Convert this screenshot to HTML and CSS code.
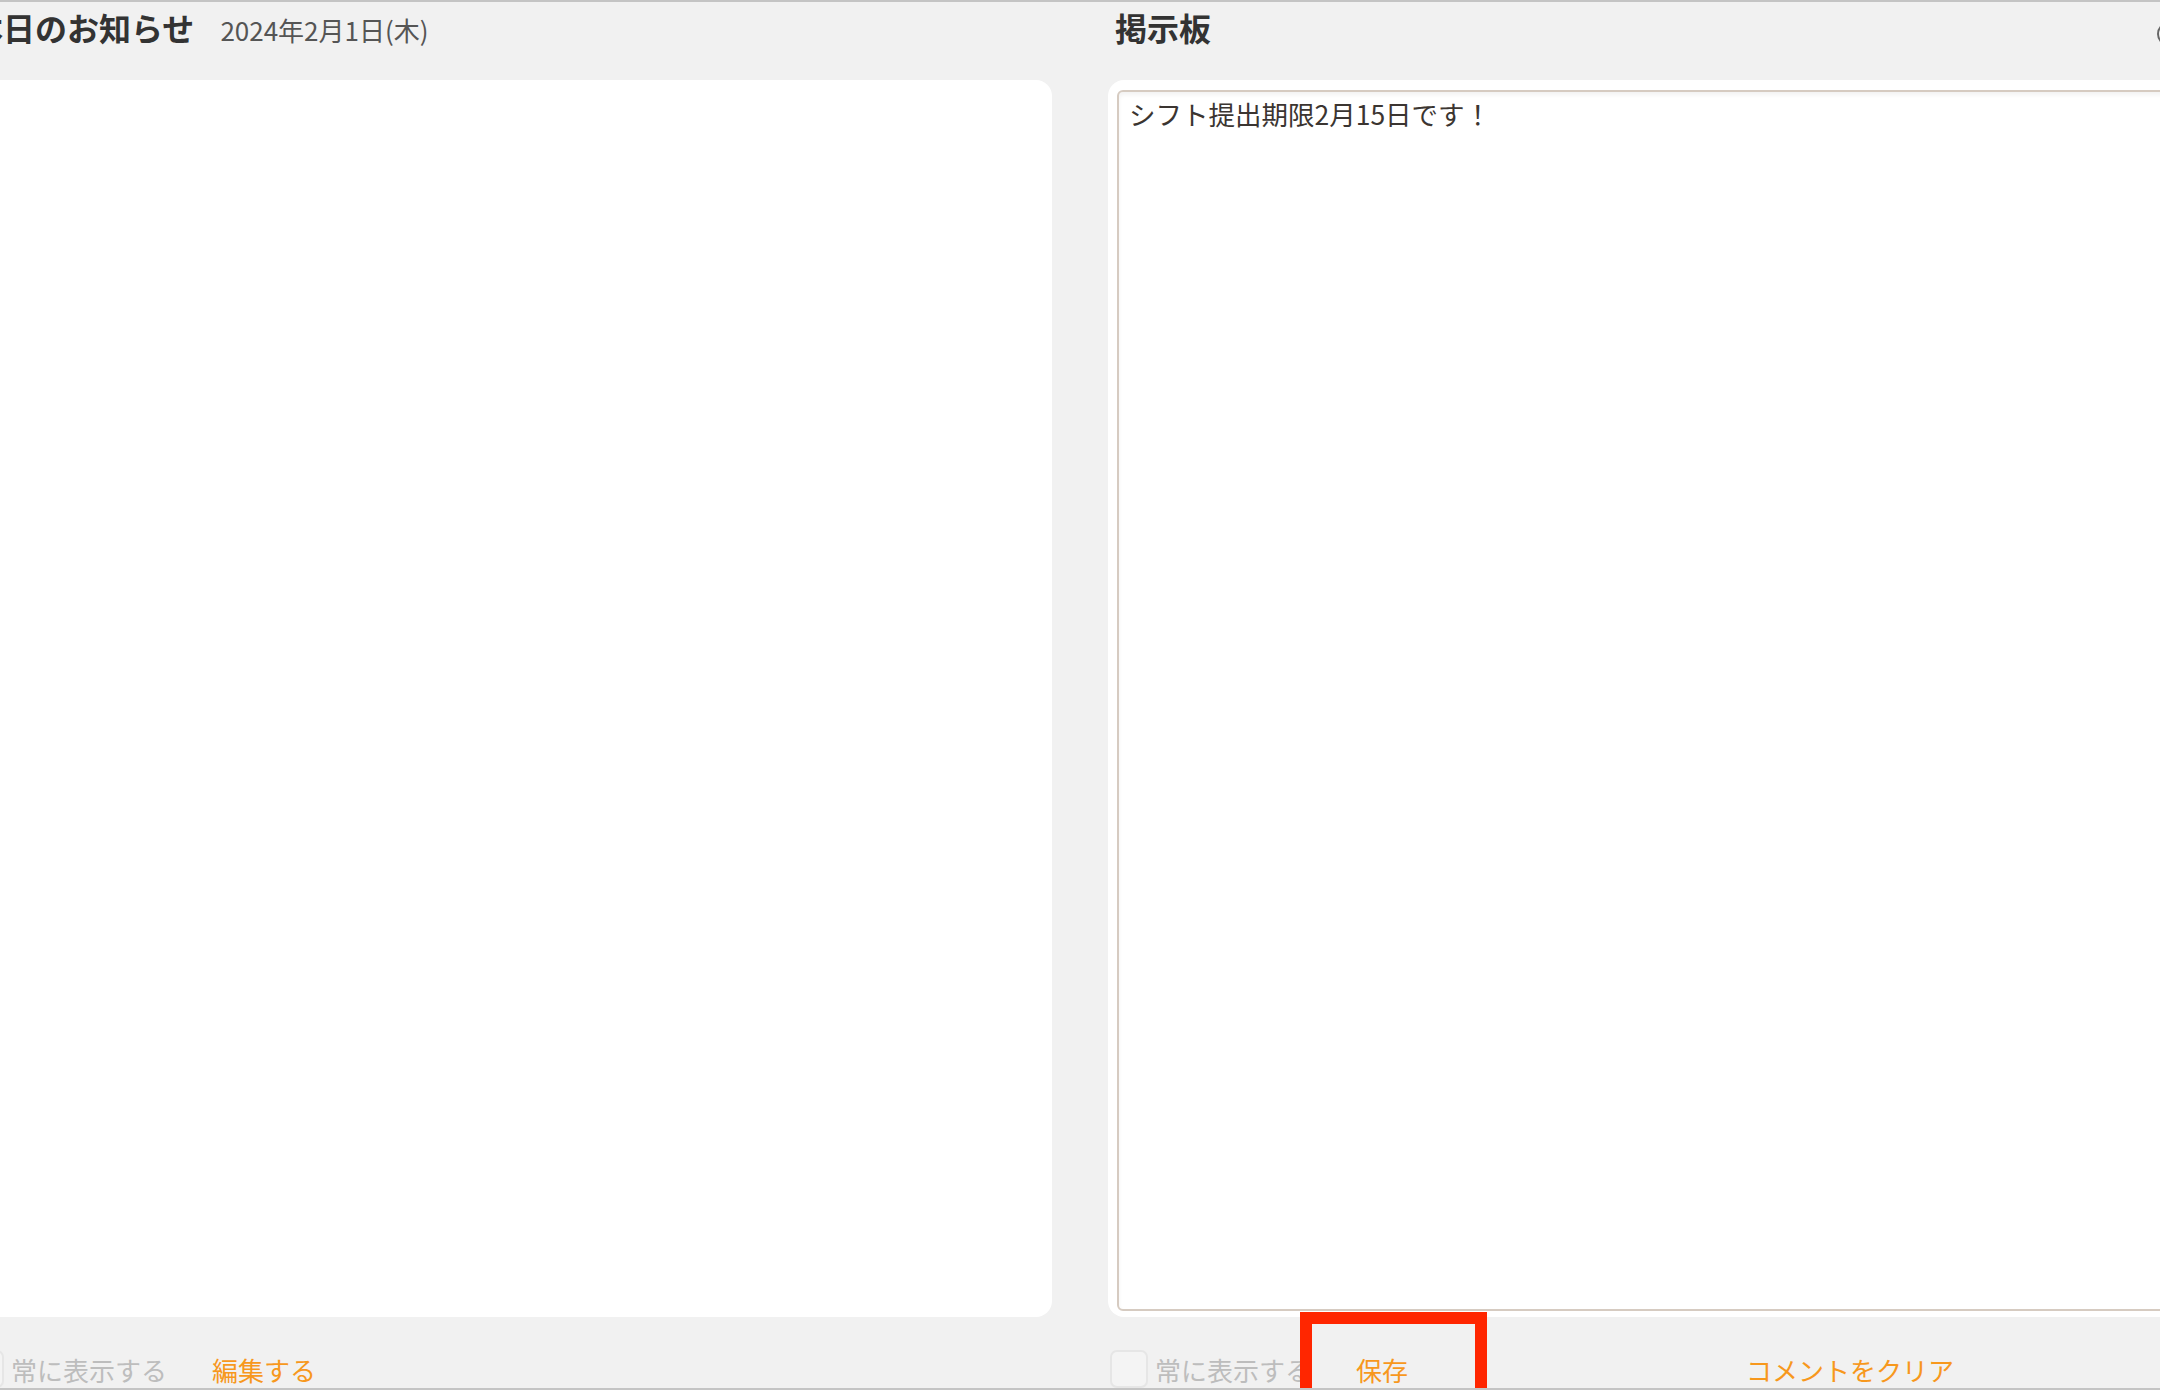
FILE: index.html
```html
<!DOCTYPE html>
<html lang="ja">
<head>
  <meta charset="UTF-8" />
  <meta name="viewport" content="width=device-width, initial-scale=1.0"/>
  <title>本日のお知らせ・掲示板</title>
  <link rel="stylesheet" href="styles.css">
</head>
<body>
  <div class="screen">
    <div class="board">
      <section class="col">
        <div class="col-head">
          <h2>本日のお知らせ</h2>
          <span class="date">2024年2月1日(木)</span>
        </div>
        <div class="panel"></div>
        <div class="col-foot">
          <label class="check"><span class="box"></span>常に表示する</label>
          <a class="action">編集する</a>
        </div>
      </section>

      <section class="col">
        <div class="col-head">
          <h2>掲示板</h2>
          <span class="help"></span>
        </div>
        <div class="panel panel-input">
          <textarea class="memo">シフト提出期限2月15日です！</textarea>
        </div>
        <div class="col-foot">
          <label class="check"><span class="box"></span>常に表示する</label>
          <a class="action">保存</a>
          <a class="action action-clear">コメントをクリア</a>
        </div>
      </section>
    </div>

    <div class="highlight"></div>
  </div>
</body>
</html>
```

FILE: styles.css
```css
body {
  margin: 0;
  padding: 0;
  background-color: #f1f1f1;
  font-family: "Noto Sans CJK JP", "Noto Sans", sans-serif;
  color: #333;
}
.screen {
  position: relative;
  width: 2160px;
  height: 1390px;
  overflow: hidden;
  box-sizing: border-box;
  border-top: 2px solid #c4c4c4;
  border-bottom: 2px solid #c4c4c4;
}
.board {
  display: grid;
  grid-template-columns: 1088px 1088px;
  column-gap: 56px;
  margin-left: -36px;
}
.col {
  display: flex;
  flex-direction: column;
}
.col-head {
  display: flex;
  align-items: baseline;
  height: 78px;
  box-sizing: border-box;
  padding: 5px 0 0 7px;
}
.col-head h2 {
  margin: 0;
  font-size: 32px;
  line-height: 40px;
  font-weight: bold;
  color: #333;
}
.date {
  margin-left: 26px;
  font-size: 26px;
  color: #555;
}
.help {
  margin-left: auto;
  margin-right: 15px;
  align-self: flex-start;
  margin-top: 15px;
  width: 20px;
  height: 20px;
  border: 2px solid #666;
  border-radius: 50%;
}
.panel {
  height: 1237px;
  background-color: #fff;
  border-radius: 16px;
  box-sizing: border-box;
}
.panel-input {
  padding: 10px 0 6px 9px;
  display: flex;
}
.memo {
  flex: 1;
  margin: 0;
  resize: none;
  border: 2px solid #d6cbc1;
  border-radius: 6px;
  box-shadow: inset 0 3px 4px rgba(0, 0, 0, 0.05);
  padding: 2px 10px;
  font-family: "Noto Sans CJK JP", "Noto Sans", sans-serif;
  font-size: 26.5px;
  line-height: 40px;
  color: #3b3531;
  background: #fff;
  outline: none;
}
.col-foot {
  display: flex;
  align-items: center;
  padding: 33px 0 0 2px;
  font-size: 26px;
}
.check {
  display: flex;
  align-items: center;
  width: 246px;
  color: #bdbdbd;
}
.box {
  width: 38px;
  height: 38px;
  box-sizing: border-box;
  margin-right: 7px;
  border: 2px solid #e6e6e6;
  border-radius: 7px;
  background-color: #f4f4f4;
}
.action {
  color: #f7981d;
  cursor: pointer;
}
.action-clear {
  margin-left: 338px;
}
.highlight {
  position: absolute;
  left: 1300px;
  top: 1310px;
  width: 187px;
  height: 100px;
  box-sizing: border-box;
  border: 12px solid #ff2600;
}
```
